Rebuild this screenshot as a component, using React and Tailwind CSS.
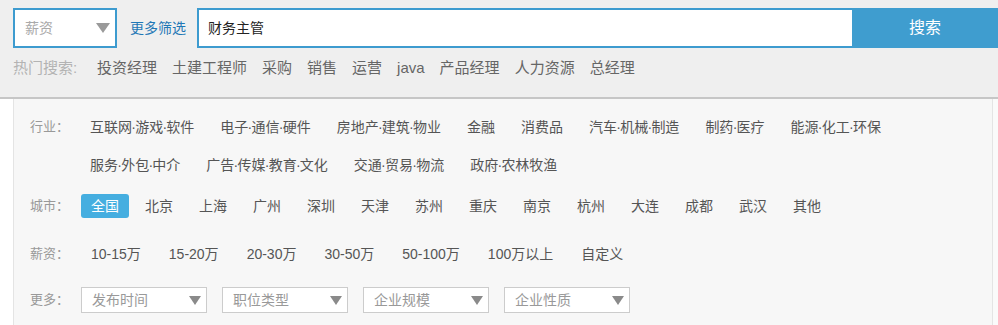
function Dotted({ text }) {
  const parts = text.split("·");
  return (
    <>
      {parts.map((p, i) => (
        <span key={i}>
          {i > 0 && <span className="mx-[-0.75px]">·</span>}
          {p}
        </span>
      ))}
    </>
  );
}

export default function App() {
  const industries1 = ["互联网·游戏·软件", "电子·通信·硬件", "房地产·建筑·物业", "金融", "消费品", "汽车·机械·制造", "制药·医疗", "能源·化工·环保"];
  const industries2 = ["服务·外包·中介", "广告·传媒·教育·文化", "交通·贸易·物流", "政府·农林牧渔"];
  const cities = ["全国", "北京", "上海", "广州", "深圳", "天津", "苏州", "重庆", "南京", "杭州", "大连", "成都", "武汉", "其他"];
  const salaries = ["10-15万", "15-20万", "20-30万", "30-50万", "50-100万", "100万以上", "自定义"];
  const more = ["发布时间", "职位类型", "企业规模", "企业性质"];
  const hot = ["投资经理", "土建工程师", "采购", "销售", "运营", "java", "产品经理", "人力资源", "总经理"];

  return (
    <div className="w-[998px] h-[325px] bg-white overflow-hidden font-['Liberation_Sans','Noto_Sans_CJK_SC',sans-serif]">
      <div className="h-[99px] bg-[#efefef] border-b-2 border-[#c6c6c6] pl-[13px] pt-[8px] shadow-[0_1px_1px_rgba(0,0,0,0.08)]">
        <div className="flex items-center h-[40px]">
          <div className="w-[104px] h-[40px] shrink-0 border-2 border-[#3d9bcf] bg-white flex items-center justify-between pl-[10px] pr-[5px]">
            <span className="text-[14px] text-[#aaaaaa]">薪资</span>
            <svg width="14" height="10" viewBox="0 0 14 10">
              <polygon points="0,0 14,0 7,10" fill="#9a9a9a" />
            </svg>
          </div>
          <span className="ml-[13px] w-[56px] shrink-0 text-[14px] text-[#1f78b6] whitespace-nowrap">更多筛选</span>
          <div className="ml-[11px] w-[655px] shrink-0 h-[40px] border-2 border-r-0 border-[#3d9bcf] bg-white flex items-center pl-[9px] text-[14px] text-[#222222]">
            财务主管
          </div>
          <div className="w-[146px] shrink-0 h-[40px] bg-[#3f9dcf] text-white text-[16px] flex items-center justify-center">
            搜索
          </div>
        </div>
        <div className="mt-[8px] h-[24px] flex items-center text-[15px] whitespace-nowrap">
          <span className="text-[#b3b3b3] w-[84px] shrink-0">热门搜索:</span>
          <div className="flex gap-[15px] text-[#666666]">
            {hot.map((h) => (
              <span key={h}>{h}</span>
            ))}
          </div>
        </div>
      </div>

      <div className="flex h-[226px]">
        <div className="w-[13px] shrink-0 bg-white" />
        <div className="w-[980px] shrink-0 bg-[#f7f7f7] border-l border-r border-[#e4e4e4] pl-[16px] pt-[9px] whitespace-nowrap">
          <div className="flex">
            <div className="w-[50px] shrink-0 h-[38px] flex items-center text-[13px] text-[#999999]">行业：</div>
            <div className="flex flex-col">
              <div className="flex gap-[6px] h-[38px] items-center text-[14px] text-[#555555]">
                {industries1.map((t) => (
                  <span key={t} className="px-[10px]"><Dotted text={t} /></span>
                ))}
              </div>
              <div className="flex gap-[6px] h-[38px] items-center text-[14px] text-[#555555]">
                {industries2.map((t) => (
                  <span key={t} className="px-[10px]"><Dotted text={t} /></span>
                ))}
              </div>
            </div>
          </div>

          <div className="flex mt-[10px] h-[24px] items-center">
            <div className="w-[51px] shrink-0 text-[13px] text-[#999999]">城市：</div>
            <div className="flex gap-[6px] items-center text-[14px] text-[#555555]">
              {cities.map((c, i) => (
                <span
                  key={c}
                  className={
                    i === 0
                      ? "px-[10px] h-[24px] flex items-center bg-[#45aee0] text-white rounded-[3px]"
                      : "px-[10px] h-[24px] flex items-center"
                  }
                >
                  {c}
                </span>
              ))}
            </div>
          </div>

          <div className="flex mt-[24px] h-[24px] items-center">
            <div className="w-[51px] shrink-0 text-[13px] text-[#999999]">薪资：</div>
            <div className="flex gap-[8px] items-center text-[14px] text-[#555555]">
              {salaries.map((s) => (
                <span key={s} className="px-[10px]">{s}</span>
              ))}
            </div>
          </div>

          <div className="flex mt-[21px] h-[26px] items-center">
            <div className="w-[51px] shrink-0 text-[13px] text-[#999999]">更多：</div>
            <div className="flex gap-[15px]">
              {more.map((m) => (
                <div
                  key={m}
                  className="w-[126px] h-[26px] bg-white border border-[#cccccc] flex items-center justify-between pl-[10px] pr-[5px]"
                >
                  <span className="text-[14px] text-[#999999]">{m}</span>
                  <svg width="12" height="9" viewBox="0 0 12 9">
                    <polygon points="0,0 12,0 6,9" fill="#8a8a8a" />
                  </svg>
                </div>
              ))}
            </div>
          </div>
        </div>
        <div className="flex-1 bg-[#fafafa]" />
      </div>
    </div>
  );
}
